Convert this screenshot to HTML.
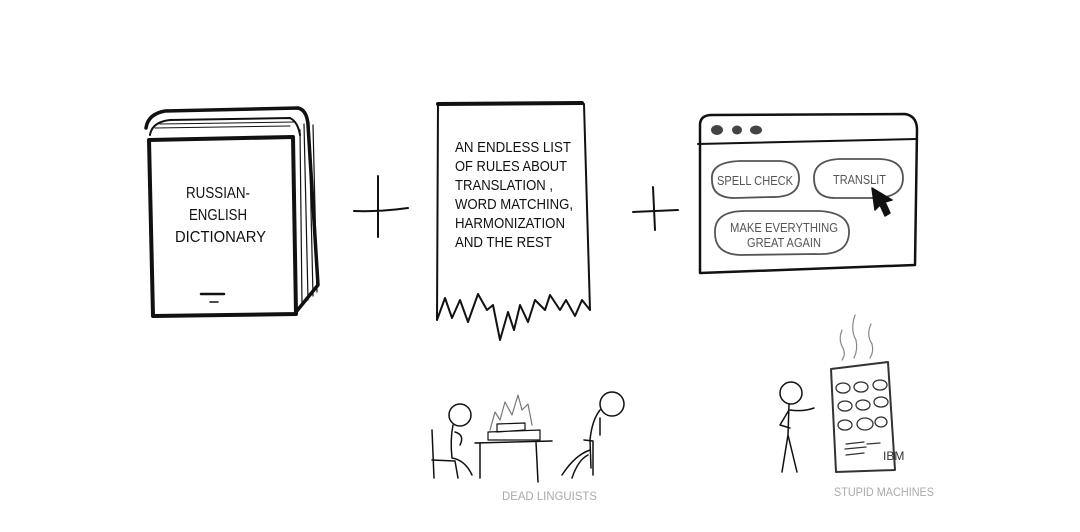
<!DOCTYPE html>
<html><head><style>
html,body{margin:0;padding:0;background:#fff;width:1080px;height:532px;overflow:hidden}
svg{display:block}
text{font-family:"Liberation Sans",sans-serif}
</style></head><body>
<svg width="1080" height="532" viewBox="0 0 1080 532" fill="none" stroke="#111" stroke-linecap="round" stroke-linejoin="round">
<!-- Book -->
<path d="M146 128 Q148 114 165 111 L298 108 Q307 110 308 125 L318 285 L296 312" stroke-width="3.5"/>
<path d="M150 135 Q152 122 170 120 L290 118 Q298 122 300 135" stroke-width="2"/>
<path d="M300 130 L302 305 M304 124 L308 300 M309 122 L313 296 M313 125 L317 292" stroke-width="1.2"/>
<path d="M149 140 L293 137 L296 314 L153 316 Z" stroke-width="4"/>
<path d="M155 128 L290 126 M160 124 L295 122" stroke-width="1"/>
<path d="M201 294 L224 294" stroke-width="2.5"/>
<path d="M210 302 L218 302" stroke-width="1.5"/>
<g fill="#111" stroke="none" font-size="16" lengthAdjust="spacingAndGlyphs">
<text x="186" y="198" textLength="64" lengthAdjust="spacingAndGlyphs">RUSSIAN-</text>
<text x="189" y="220" textLength="58" lengthAdjust="spacingAndGlyphs">ENGLISH</text>
<text x="175" y="242" textLength="91" lengthAdjust="spacingAndGlyphs">DICTIONARY</text>
</g>
<!-- plus 1 -->
<path d="M354 211 Q380 212 408 208 M378 176 L378 237" stroke-width="2"/>
<!-- paper -->
<path d="M438 104 L582 103" stroke-width="4"/>
<path d="M438 104 L437 320 L445 298 L452 318 L460 300 L468 322 L478 294 L487 310 L493 305 L500 340 L508 312 L514 330 L520 305 L528 322 L535 300 L545 310 L550 295 L560 310 L566 300 L575 316 L582 300 L590 310 L584 104" stroke-width="2"/>
<g fill="#111" stroke="none" font-size="15">
<text x="455" y="152" textLength="116" lengthAdjust="spacingAndGlyphs">AN ENDLESS LIST</text>
<text x="455" y="171" textLength="112" lengthAdjust="spacingAndGlyphs">OF RULES ABOUT</text>
<text x="455" y="190" textLength="98" lengthAdjust="spacingAndGlyphs">TRANSLATION ,</text>
<text x="455" y="209" textLength="118" lengthAdjust="spacingAndGlyphs">WORD MATCHING,</text>
<text x="455" y="228" textLength="110" lengthAdjust="spacingAndGlyphs">HARMONIZATION</text>
<text x="455" y="247" textLength="97" lengthAdjust="spacingAndGlyphs">AND THE REST</text>
</g>
<!-- plus 2 -->
<path d="M633 212 L678 210 M653 187 L655 230" stroke-width="2"/>
<!-- browser -->
<path d="M700 125 Q700 115 712 115 L905 114 Q917 116 917 130 L915 265 L700 273 Z" stroke-width="2.5"/>
<path d="M698 144 L916 139" stroke-width="2"/>
<g fill="#444" stroke="none">
<ellipse cx="717" cy="130" rx="6" ry="5"/><ellipse cx="737" cy="130" rx="5" ry="4.5"/><ellipse cx="756" cy="130" rx="6" ry="4.5"/>
</g>
<g stroke="#555" stroke-width="1.8">
<path d="M712 180 Q710 162 740 161 L780 161 Q800 162 799 180 Q798 198 770 197 L735 198 Q712 198 712 180 Z"/>
<path d="M814 178 Q814 160 840 159 L880 159 Q903 160 903 178 Q903 199 870 198 L835 198 Q814 198 814 178 Z"/>
<path d="M715 233 Q714 211 745 211 L820 211 Q850 213 849 233 Q848 256 815 254 L740 255 Q715 254 715 233 Z"/>
</g>
<g fill="#555" stroke="none" font-size="12.5">
<text x="717" y="185" textLength="76" lengthAdjust="spacingAndGlyphs">SPELL CHECK</text>
<text x="833" y="184" textLength="53" lengthAdjust="spacingAndGlyphs">TRANSLIT</text>
<text x="730" y="232" textLength="108" lengthAdjust="spacingAndGlyphs">MAKE EVERYTHING</text>
<text x="747" y="247" textLength="74" lengthAdjust="spacingAndGlyphs">GREAT AGAIN</text>
</g>
<path d="M872 188 L875 210 L880 205 L885 216 L890 213 L885 202 L892 200 Z" fill="#111" stroke-width="1.5"/>
<!-- dead linguists -->
<g stroke-width="1.5">
<path d="M432 430 L434 478 M432 460 L455 461 L458 478"/>
<circle cx="460" cy="415" r="11"/>
<path d="M453 425 Q450 440 452 458 Q465 460 472 475 M455 432 Q465 435 460 445"/>
<path d="M475 443 L552 441 M480 443 L480 478 M536 442 L538 482"/>
<path d="M488 440 L540 440 L540 430 L488 432 Z M497 432 L525 430 L525 423 L497 424 Z" stroke-width="1.2"/>
<path d="M490 430 L495 412 L500 420 L505 402 L512 415 L518 395 L522 410 L528 404 L532 425" stroke="#777" stroke-width="1.2"/>
<circle cx="612" cy="404" r="12"/>
<path d="M600 410 Q592 420 590 440 L591 468 M600 418 L600 435 M584 440 L593 441 L593 475 M590 450 Q575 455 562 475 M588 455 Q578 460 572 478"/>
</g>
<text x="502" y="500" fill="#aaa" stroke="none" font-size="12" textLength="95" lengthAdjust="spacingAndGlyphs">DEAD LINGUISTS</text>
<!-- stupid machines -->
<g stroke-width="1.5">
<circle cx="791" cy="393" r="11"/>
<path d="M789 404 L788 435 L782 472 M788 435 L797 472 M789 410 L780 425 L790 428 M790 410 Q803 412 814 408"/>
<path d="M831 369 L888 362 L895 470 L836 472 Z" stroke="#333" stroke-width="2"/>
</g>
<g stroke="#333" stroke-width="1.3">
<ellipse cx="843" cy="388" rx="7" ry="5"/><ellipse cx="861" cy="387" rx="7" ry="5"/><ellipse cx="880" cy="385" rx="7" ry="5"/>
<ellipse cx="845" cy="406" rx="7" ry="5"/><ellipse cx="863" cy="405" rx="7" ry="5"/><ellipse cx="881" cy="402" rx="7" ry="5"/>
<ellipse cx="845" cy="425" rx="7" ry="5"/><ellipse cx="865" cy="424" rx="8" ry="6"/><ellipse cx="881" cy="422" rx="6" ry="5"/>
<path d="M846 444 L864 442 M845 449 L866 447 M846 455 L864 453 M867 444 L880 443"/>
</g>
<text x="883" y="460" fill="#333" stroke="none" font-size="12">IBM</text>
<path d="M842 330 Q838 340 843 348 Q846 355 842 360 M855 315 Q850 330 856 340 Q858 350 854 358 M871 324 Q866 335 872 344 Q874 352 870 358" stroke="#888" stroke-width="1.2"/>
<text x="834" y="496" fill="#aaa" stroke="none" font-size="12" textLength="100" lengthAdjust="spacingAndGlyphs">STUPID MACHINES</text>
</svg>
</body></html>
